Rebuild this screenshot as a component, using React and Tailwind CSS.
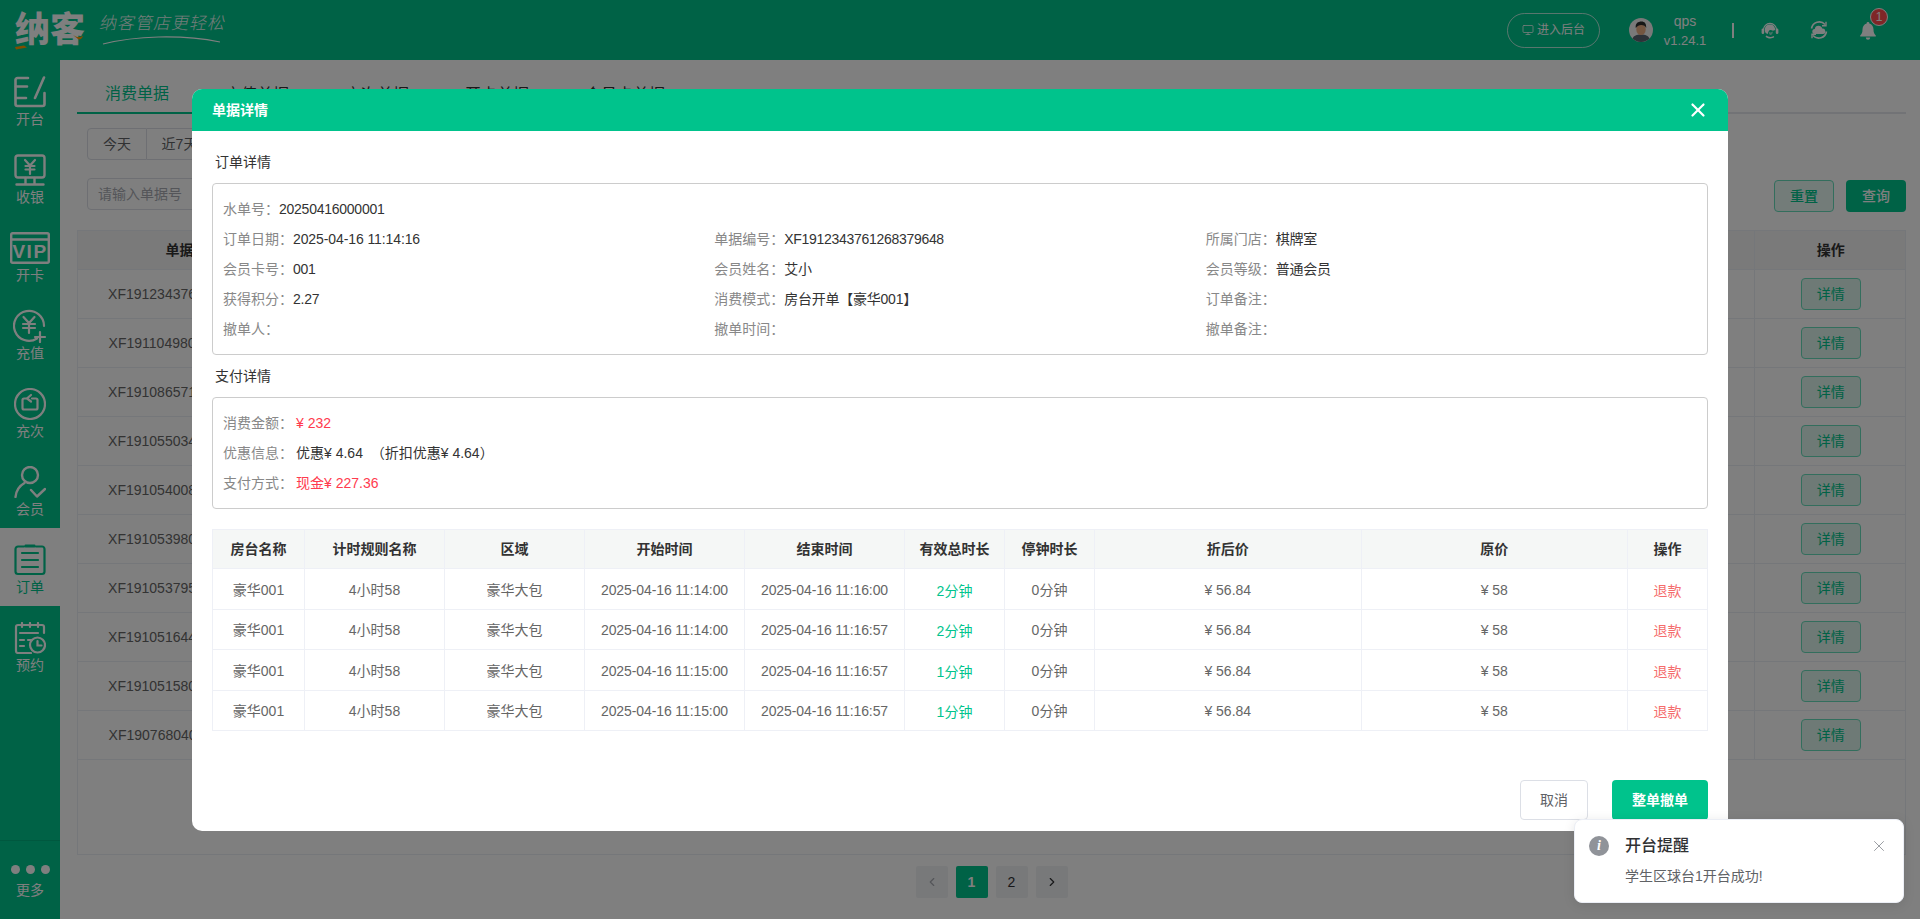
import React from "react";
import { X, ChevronLeft, ChevronRight, Monitor } from "lucide-react";

const tabs = ["消费单据", "充值单据", "充次单据", "开卡单据", "会员卡单据"];

const orderNos = [
  "XF1912343761268379648",
  "XF1911049800123904001",
  "XF1910865719384064002",
  "XF1910550340216832003",
  "XF1910540084576256004",
  "XF1910539805478912005",
  "XF1910537954209792006",
  "XF1910516445388800007",
  "XF1910515802329088008",
  "XF1907680401129472009",
];

const lines = [
  { start: "2025-04-16 11:14:00", end: "2025-04-16 11:16:00", mins: "2分钟" },
  { start: "2025-04-16 11:14:00", end: "2025-04-16 11:16:57", mins: "2分钟" },
  { start: "2025-04-16 11:15:00", end: "2025-04-16 11:16:57", mins: "1分钟" },
  { start: "2025-04-16 11:15:00", end: "2025-04-16 11:16:57", mins: "1分钟" },
];

function IconOpen() {
  return (
    <svg width="32" height="32" viewBox="0 0 32 32" fill="none" stroke="currentColor" strokeWidth="2.6" strokeLinecap="round">
      <path d="M14 2H3.500a2 2 0 0 0-2 2v24a2 2 0 0 0 2 2h25a2 2 0 0 0 2-2V17" />
      <path d="M2 10.500h11M2 22h10M30 1.500l-9 20.500" />
    </svg>
  );
}

function IconCash() {
  return (
    <svg width="32" height="32" viewBox="0 0 32 32" fill="none" stroke="currentColor" strokeWidth="2.4" strokeLinecap="round">
      <rect x="1.500" y="1.500" width="29" height="22" rx="2.500" />
      <path d="M11 6l5 5.500L21 6M11.500 12h9M11.500 15.500h9M16 11.500V20" strokeWidth="2.200" />
      <path d="M11.500 24v6M20.500 24v6M2.500 30.500h27" />
    </svg>
  );
}

function IconVip() {
  return (
    <svg width="40" height="32" viewBox="0 0 40 32" fill="none" stroke="currentColor" strokeWidth="2.400">
      <rect x="1.200" y="1.200" width="37.600" height="29.600" rx="1.500" />
      <path d="M1.200 7.500h37.600" />
      <text x="20" y="26" textAnchor="middle" fill="currentColor" stroke="none" fontSize="19" fontWeight="700" letterSpacing="1.500" fontFamily="Liberation Sans">VIP</text>
    </svg>
  );
}

function IconRecharge() {
  return (
    <svg width="34" height="34" viewBox="0 0 34 34" fill="none" stroke="currentColor" strokeWidth="2.200" strokeLinecap="round">
      <path d="M24 29.500A15 15 0 1 1 31 17" />
      <path d="M10.500 8l5.500 6 5.500-6M10 15h12M10 19h12M16 14v10" />
      <path d="M27 23v10M22 28h10" />
    </svg>
  );
}

function IconTimes() {
  return (
    <svg width="32" height="32" viewBox="0 0 32 32" fill="none" stroke="currentColor" strokeWidth="2.200" strokeLinecap="round">
      <circle cx="16" cy="16" r="15" />
      <path d="M12 10.500H10a1.500 1.500 0 0 0-1.500 1.500v8a1.500 1.500 0 0 0 1.500 1.500h12a1.500 1.500 0 0 0 1.500-1.500v-8a1.500 1.500 0 0 0-1.500-1.500h-4" />
      <path d="M17 7l-4 3.500 4 3" />
    </svg>
  );
}

function IconMember() {
  return (
    <svg width="32" height="32" viewBox="0 0 32 32" fill="none" stroke="currentColor" strokeWidth="2.400" strokeLinecap="round">
      <circle cx="16" cy="9" r="8" />
      <path d="M1.500 31c.6-6.800 4.500-11.500 9-14" />
      <path d="M17 24l6 6.500L31 23" strokeLinejoin="round" />
    </svg>
  );
}

function IconOrder() {
  return (
    <svg width="32" height="32" viewBox="0 0 32 32" fill="none" stroke="currentColor" strokeWidth="2.200" strokeLinecap="round">
      <path d="M10 2.500H4a2.500 2.500 0 0 0-2.500 2.500v22.500A2.500 2.500 0 0 0 4 30h24a2.500 2.500 0 0 0 2.500-2.500V5A2.500 2.500 0 0 0 28 2.500h-6" />
      <rect x="10.500" y="0.500" width="11" height="3" rx="1" fill="currentColor" stroke="none" />
      <path d="M8 9h16M8 16h16M8 23h16" />
    </svg>
  );
}

function IconBooking() {
  return (
    <svg width="32" height="32" viewBox="0 0 32 32" fill="none" stroke="currentColor" strokeWidth="2.200" strokeLinecap="round">
      <path d="M30 11V5a2 2 0 0 0-2-2H4a2 2 0 0 0-2 2v24a2 2 0 0 0 2 2h13" />
      <path d="M8 1v4M16 1v4M24 1v4M6 11h18M6 18h4M6 24h4M14 18h4" />
      <circle cx="23.500" cy="23" r="7.500" />
      <path d="M23.500 19v4.500h4" />
    </svg>
  );
}

function NavItem({ icon, label, active }) {
  return (
    <div className={active ? "flex h-[78px] flex-col items-center pt-4 bg-white text-[#00c48d]" : "flex h-[78px] flex-col items-center pt-4 text-white"}>
      <div className="flex h-8 items-center justify-center">{icon}</div>
      <div className="mt-px text-sm leading-5">{label}</div>
    </div>
  );
}

function Logo() {
  return (
    <div className="flex items-center pl-[15px] text-white">
      <div className="relative h-[40px] w-[72px] text-[35px] leading-[40px] font-black whitespace-nowrap">
        纳客
        <svg className="absolute left-0 top-0" width="72" height="40" viewBox="0 0 72 40" fill="#ff9a00">
          <path d="M0 37l9-1.500 3 2-11 2zM58 25c3 2 6 3 10 1-1 3-3 4-5 3z" />
        </svg>
      </div>
      <div className="relative ml-[13px] h-[40px] w-[126px]">
        <div className="-skew-x-12 text-[17px] leading-[28px] font-light tracking-[1px] whitespace-nowrap opacity-90">纳客管店更轻松</div>
        <svg className="absolute left-0 top-[24px]" width="126" height="12" viewBox="0 0 126 12" fill="none" stroke="currentColor">
          <path d="M3 10C35 2 80 0 120 8" strokeWidth="1.200" />
        </svg>
      </div>
    </div>
  );
}

function Headset() {
  return (
    <svg width="18" height="18" viewBox="0 0 18 18" fill="currentColor">
      <path d="M1.800 9a7.200 7.200 0 0 1 14.400 0h-1.200a6 6 0 0 0-12 0z" />
      <path d="M3.800 9.500C3.500 5.500 6 3.500 9 3.500s5.200 2 5.200 5.500l-2.200.8C10 8.800 8.500 8.800 7.800 10c-.5.800-.8 2-1 3C5 12.700 4 11.500 3.800 9.500z" />
      <path d="M8 10.800c1 .8 2.500.8 4-.2-.3 2.500-1.500 3.600-2.800 3.400C8.300 13.800 7.900 12.500 8 10.800z" opacity="0.55" />
      <rect x="0.600" y="7.500" width="2.600" height="5.500" rx="1.300" />
      <rect x="14.800" y="7.500" width="2.600" height="5.500" rx="1.300" />
      <path d="M5.500 14.500c1.500 1.600 5 1.900 7 .5l.8 1c-2.300 2.200-6.800 1.800-8.800-.6z" />
    </svg>
  );
}

function CloudSync() {
  return (
    <svg width="18" height="18" viewBox="0 0 18 18" fill="none" stroke="currentColor" strokeWidth="1.600">
      <path d="M1.500 7.500a7.800 7.800 0 0 1 13.500-4M16.500 10.500a7.800 7.800 0 0 1-13.500 4" />
      <path d="M16 .8v4h-4M2 17.200v-4h4" strokeWidth="1.400" />
      <path d="M4.800 13a2.500 2.500 0 0 1 0-5 3.800 3.800 0 0 1 7.400-.4A2.700 2.700 0 0 1 13 13z" fill="currentColor" stroke="none" />
    </svg>
  );
}

function Bell() {
  return (
    <svg width="16" height="18" viewBox="0 0 16 18" fill="currentColor">
      <path d="M8 0a1.300 1.300 0 0 1 1.300 1.500C12 2.200 13.500 4.500 13.500 7.500c0 3 .7 4.500 2.300 6v1H.2v-1C1.800 12 2.500 10.500 2.500 7.500c0-3 1.500-5.300 4.200-6A1.300 1.300 0 0 1 8 0z" />
      <path d="M5.800 15.500h4.400a2.200 2.200 0 0 1-4.400 0z" />
    </svg>
  );
}

function Avatar() {
  return (
    <svg width="24" height="24" viewBox="0 0 24 24">
      <circle cx="12" cy="12" r="12" fill="#f2f2f2" />
      <path d="M3.500 20.500c1.500-3 4-4 8.500-4s7 1 8.500 4A12 12 0 0 1 12 24a12 12 0 0 1-8.500-3.500z" fill="#5b6470" />
      <ellipse cx="12" cy="11.500" rx="4.700" ry="5.500" fill="#e9ac83" />
      <path d="M6.800 10C6 5.500 9 3.500 12.500 3.500c3 0 5 2 4.700 6.500-.8-2-2.500-3-5-3-2 0-4 1-5.400 3z" fill="#2c2c2c" />
    </svg>
  );
}

function TopBar() {
  return (
    <header className="flex h-[60px] items-center justify-between bg-[#00c48d] text-white">
      <Logo />
      <div className="flex items-center">
        <button className="flex h-[35px] w-[93px] items-center justify-center gap-[3px] rounded-full border border-white/70 text-xs">
          <Monitor size={12} strokeWidth={1.5} />
          进入后台
        </button>
        <div className="ml-[29px]"><Avatar /></div>
        <div className="ml-[10px] flex w-[44px] flex-col items-center leading-[19px]">
          <span className="text-sm">qps</span>
          <span className="text-[13px] whitespace-nowrap">v1.24.1</span>
        </div>
        <div className="ml-[25px] h-[15px] w-[2px] bg-white" />
        <div className="ml-[27px]"><Headset /></div>
        <div className="ml-[31px]"><CloudSync /></div>
        <div className="relative top-px mr-[44px] ml-[32px]">
          <Bell />
          <span className="absolute top-[-14px] left-[10px] flex h-[18px] w-[18px] items-center justify-center rounded-full border border-white bg-[#ff4d4f] text-xs">1</span>
        </div>
      </div>
    </header>
  );
}

function Sidebar() {
  return (
    <aside className="flex w-[60px] shrink-0 flex-col bg-[#00c48d]">
      <NavItem icon={<IconOpen />} label="开台" />
      <NavItem icon={<IconCash />} label="收银" />
      <NavItem icon={<IconVip />} label="开卡" />
      <NavItem icon={<IconRecharge />} label="充值" />
      <NavItem icon={<IconTimes />} label="充次" />
      <NavItem icon={<IconMember />} label="会员" />
      <NavItem icon={<IconOrder />} label="订单" active />
      <NavItem icon={<IconBooking />} label="预约" />
      <div className="mt-auto flex h-[79px] flex-col items-center border-t border-black/10 pt-6 text-white">
        <div className="flex gap-[6px]">
          <span className="size-[9px] rounded-full bg-white" />
          <span className="size-[9px] rounded-full bg-white" />
          <span className="size-[9px] rounded-full bg-white" />
        </div>
        <div className="mt-[6px] text-sm leading-5">更多</div>
      </div>
    </aside>
  );
}

function OrderList() {
  return (
    <main className="flex min-w-0 flex-1 flex-col bg-white pt-[18px] pr-[14px] pl-[17px]">
      <div className="flex h-[36px] border-b-2 border-[#e4e7ed]">
        {tabs.map((t, i) => (
          <div
            key={t}
            className={i === 0 ? "flex h-[36px] items-center border-b-2 border-[#00c48d] px-7 pb-[2px] text-base text-[#00c48d]" : "flex h-[36px] items-center px-7 pb-[2px] text-base text-[#333333]"}
          >
            {t}
          </div>
        ))}
      </div>

      <div className="mt-[14px] ml-[10px] flex">
        <div className="flex h-[32px] w-[60px] items-center justify-center rounded-l-[4px] border border-[#dcdfe6] text-sm text-[#606266]">今天</div>
        <div className="flex h-[32px] w-[66px] items-center justify-center border-y border-r border-[#dcdfe6] text-sm text-[#606266]">近7天</div>
      </div>

      <div className="mt-[18px] ml-[10px] flex justify-between">
        <div className="flex h-[32px] w-[220px] items-center rounded-[4px] border border-[#dcdfe6] px-[10px] text-sm text-[#a8abb2]">请输入单据号</div>
        <div className="mt-[2px] flex gap-3">
          <button className="h-[32px] w-[60px] rounded-[4px] border border-[#66dcbb] bg-[#e6f9f3] text-sm font-medium text-[#00c48d]">重置</button>
          <button className="h-[32px] w-[60px] rounded-[4px] bg-[#00c48d] text-sm font-medium text-white">查询</button>
        </div>
      </div>

      <div className="mt-[18px] h-[625px] border border-[#ebeef5]">
        <table className="w-full table-fixed border-collapse text-sm">
          <thead>
            <tr className="h-[38px] bg-[#f5f5f5] font-bold text-[#333333]">
              <th className="w-[226px] border-b border-[#ebeef5] pl-[5px]">单据编号</th>
              <th className="border-b border-[#ebeef5]">消费金额</th>
              <th className="w-[151px] border-b border-l border-[#ebeef5] pl-[2px]">操作</th>
            </tr>
          </thead>
          <tbody>
            {orderNos.map((no) => (
              <tr key={no} className="h-[49px] border-b border-[#ebeef5]">
                <td className="text-center text-[#666666]">{no}</td>
                <td />
                <td className="border-l border-[#ebeef5] pl-[2px] text-center">
                  <button className="h-[32px] w-[60px] rounded-[4px] border border-[#66dcbb] bg-[#dcf5ec] text-[#00c48d]">详情</button>
                </td>
              </tr>
            ))}
          </tbody>
        </table>
      </div>

      <div className="mt-[11px] flex justify-center gap-2">
        <div className="flex size-8 items-center justify-center rounded-[2px] bg-[#f0f2f5] text-[#a8abb2]"><ChevronLeft size={14} /></div>
        <div className="flex size-8 items-center justify-center rounded-[2px] bg-[#00c48d] text-sm font-bold text-white">1</div>
        <div className="flex size-8 items-center justify-center rounded-[2px] bg-[#f0f2f5] text-sm text-[#303133]">2</div>
        <div className="flex size-8 items-center justify-center rounded-[2px] bg-[#f0f2f5] text-[#303133]"><ChevronRight size={14} /></div>
      </div>
    </main>
  );
}

function Info({ label, value, red, className, valueClass }) {
  return (
    <div className={`flex h-[30px] items-center ${className || ""}`}>
      <span className="text-[#888888]">{label}</span>
      <span className={`${red ? "text-[#ff3b4e]" : "text-[#333333]"} ${valueClass || "tracking-[-0.25px]"}`}>{value}</span>
    </div>
  );
}

function DetailModal() {
  const cell = "border border-[#eef0f6]";
  return (
    <div className="absolute inset-0 bg-black/50 pt-[89px]">
      <div className="mx-auto h-[742px] w-[1536px] overflow-hidden rounded-[10px] bg-white">
        <div className="flex h-[42px] items-center justify-between bg-[#00c38c] pr-[19px] pl-[20px] text-white">
          <span className="text-sm font-bold">单据详情</span>
          <X size={22} strokeWidth={2.4} />
        </div>

        <div className="px-5 text-sm">
          <div className="mt-[21px] mb-[11px] pl-[3px] leading-5 text-[#333333]">订单详情</div>
          <div className="grid grid-cols-3 rounded-[4px] border border-[#cccccc] px-[10px] py-[10px]">
            <Info className="col-span-3" label="水单号：" value="20250416000001" />
            <Info label="订单日期：" value="2025-04-16 11:14:16" valueClass="tracking-[-0.1px]" />
            <Info label="单据编号：" value="XF1912343761268379648" valueClass="tracking-[-0.3px]" />
            <Info label="所属门店：" value="棋牌室" />
            <Info label="会员卡号：" value="001" />
            <Info label="会员姓名：" value="艾小" />
            <Info label="会员等级：" value="普通会员" />
            <Info label="获得积分：" value="2.27" />
            <Info label="消费模式：" value="房台开单【豪华001】" />
            <Info label="订单备注：" value="" />
            <Info label="撤单人：" value="" />
            <Info label="撤单时间：" value="" />
            <Info label="撤单备注：" value="" />
          </div>

          <div className="mt-[11px] mb-[11px] pl-[3px] leading-5 text-[#333333]">支付详情</div>
          <div className="rounded-[4px] border border-[#cccccc] px-[10px] py-[10px]">
            <Info label="消费金额：" value="¥ 232" red valueClass="ml-[3px]" />
            <Info label="优惠信息：" value={"优惠¥ 4.64\u00a0 （折扣优惠¥ 4.64）"} valueClass="ml-[3px]" />
            <Info label="支付方式：" value="现金¥ 227.36" red valueClass="ml-[3px]" />
          </div>

          <table className="mt-5 w-full table-fixed border-collapse border border-[#eef0f6] text-center">
            <thead>
              <tr className="h-[39px] bg-[#f5f7f6] font-bold text-[#333333]">
                <th className={`w-[92px] ${cell}`}>房台名称</th>
                <th className={`w-[140px] ${cell}`}>计时规则名称</th>
                <th className={`w-[140px] ${cell}`}>区域</th>
                <th className={`w-[160px] ${cell}`}>开始时间</th>
                <th className={`w-[160px] ${cell}`}>结束时间</th>
                <th className={`w-[100px] ${cell}`}>有效总时长</th>
                <th className={`w-[90px] ${cell}`}>停钟时长</th>
                <th className={cell}>折后价</th>
                <th className={cell}>原价</th>
                <th className={`w-[80px] ${cell}`}>操作</th>
              </tr>
            </thead>
            <tbody className="text-[#666666]">
              {lines.map((row, i) => (
                <tr key={i} className="h-[40.5px]">
                  <td className={`${cell} pt-[2px]`}>豪华001</td>
                  <td className={`${cell} pt-[2px]`}>4小时58</td>
                  <td className={`${cell} pt-[2px]`}>豪华大包</td>
                  <td className={`${cell} pt-[2px] tracking-[-0.1px]`}>{row.start}</td>
                  <td className={`${cell} pt-[2px] tracking-[-0.1px]`}>{row.end}</td>
                  <td className={`${cell} pt-[4px] text-[#00c48d]`}>{row.mins}</td>
                  <td className={`${cell} pt-[2px]`}>0分钟</td>
                  <td className={`${cell} pt-[2px]`}>¥ 56.84</td>
                  <td className={`${cell} pt-[2px]`}>¥ 58</td>
                  <td className={`${cell} pt-[4px] text-[#f56c6c]`}>退款</td>
                </tr>
              ))}
            </tbody>
          </table>

          <div className="mt-[49px] flex justify-end gap-6">
            <button className="h-10 w-[68px] rounded-[4px] border border-[#dcdfe6] text-[#606266]">取消</button>
            <button className="h-10 w-[96px] rounded-[4px] bg-[#00c38c] font-bold text-white">整单撤单</button>
          </div>
        </div>
      </div>
    </div>
  );
}

function Toast() {
  return (
    <div className="absolute right-[16px] bottom-[16px] flex h-[84px] w-[330px] rounded-[8px] border border-[#ebeef5] bg-white pt-[16px] pl-[14px] shadow-[0_2px_12px_rgba(0,0,0,0.1)]">
      <div className="flex size-5 items-center justify-center rounded-full bg-[#909399] font-['Liberation_Serif',serif] text-sm font-bold text-white italic">i</div>
      <div className="ml-[16px]">
        <div className="text-base leading-5 font-medium text-[#303133]">开台提醒</div>
        <div className="mt-[10px] text-sm leading-5 text-[#606266]">学生区球台1开台成功!</div>
      </div>
      <X className="absolute top-[17px] right-[15px] text-[#909399]" size={18} strokeWidth={1.2} />
    </div>
  );
}

export default function App() {
  return (
    <div className="relative h-screen w-full overflow-hidden font-['Liberation_Sans','Noto_Sans_CJK_SC',sans-serif]">
      <TopBar />
      <div className="flex h-[calc(100%-60px)]">
        <Sidebar />
        <OrderList />
      </div>
      <DetailModal />
      <Toast />
    </div>
  );
}
